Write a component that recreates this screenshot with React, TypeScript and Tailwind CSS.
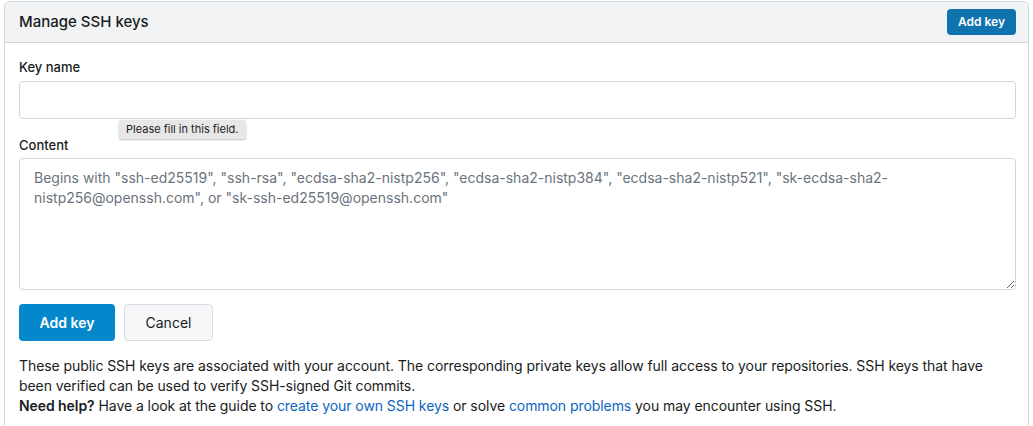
import React from "react"

const font = { fontFamily: "Inter, 'Noto Sans', 'Liberation Sans', sans-serif" }

export default function App() {
  return (
    <div className="h-[426px] w-full overflow-hidden bg-white px-[4px] pt-[1px] text-[#181c21]" style={font}>
      <div className="rounded-t-[5px] border border-[#d0d7de]">
        <div className="flex h-[41px] items-center justify-between rounded-t-[5px] border-b border-[#d0d7de] bg-[#f1f3f5] pl-[14px] pr-[12px]">
          <h4 className="text-[15px] font-medium">Manage SSH keys</h4>
          <button className="h-[26px] rounded-[4px] bg-[#0f73ad] px-[11px] text-[12px] font-semibold text-white">
            Add key
          </button>
        </div>

        <div className="pl-[14px] pr-[12px] pt-[14px] pb-[20px]">
          <label className="block text-[13px] font-medium leading-[20px]">Key name</label>
          <div className="relative mt-[4px]">
            <input className="block h-[38px] w-full rounded-[4px] border border-[#d0d7de] bg-white px-[14px] text-[14px] outline-none" />
            <div className="absolute left-[100px] top-[39px] z-10 rounded-[2px] bg-[#e7e7e7] px-[7px] py-[2px] text-[11px] leading-[15px] text-[#222] shadow-[0_1px_2px_rgba(0,0,0,0.25)]">
              Please fill in this field.
            </div>
          </div>

          <label className="mt-[16px] block text-[13px] font-medium leading-[20px]">Content</label>
          <textarea
            className="mt-[3px] block h-[132px] w-full rounded-[4px] border border-[#d0d7de] bg-white px-[14px] py-[9px] text-[14px] leading-[20px] outline-none placeholder:text-[#6a737d]"
            placeholder={`Begins with "ssh-ed25519", "ssh-rsa", "ecdsa-sha2-nistp256", "ecdsa-sha2-nistp384", "ecdsa-sha2-nistp521", "sk-ecdsa-sha2-nistp256@openssh.com", or "sk-ssh-ed25519@openssh.com"`}
          />

          <div className="mt-[14px] flex gap-[9px]">
            <button className="h-[37px] w-[96px] rounded-[4px] bg-[#0587cb] text-[14px] font-semibold text-white">
              Add key
            </button>
            <button className="h-[37px] w-[89px] rounded-[4px] border border-[#d8dce1] bg-[#f6f7f9] text-[14px] text-[#181c21]">
              Cancel
            </button>
          </div>

          <p className="mt-[15px] text-[14px] leading-[20px] tracking-[-0.07px]">
            These public SSH keys are associated with your account. The corresponding private keys allow full access to
            your repositories. SSH keys that have been verified can be used to verify SSH-signed Git commits.
            <br />
            <strong className="font-semibold">Need help?</strong> Have a look at the guide to{" "}
            <a className="text-[#0b65c2]">create your own SSH keys</a> or solve{" "}
            <a className="text-[#0b65c2]">common problems</a> you may encounter using SSH.
          </p>
        </div>
      </div>
    </div>
  )
}
